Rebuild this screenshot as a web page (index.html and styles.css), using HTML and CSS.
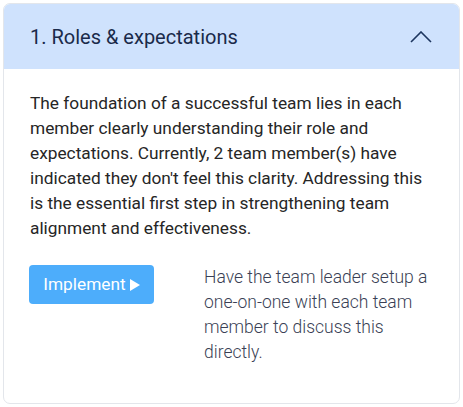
FILE: index.html
```html
<!DOCTYPE html>
<html>
<head>
<meta charset="utf-8">
<link rel="stylesheet" href="styles.css">
</head>
<body>
<div class="card">
  <div class="header">
    <h2 class="title">1. Roles &amp; expectations</h2>
    <svg class="chev" width="22" height="12" viewBox="0 0 22 12"><path d="M1 11 L11 1 L21 11" fill="none" stroke="#1d3660" stroke-width="1.6"/></svg>
  </div>
  <div class="body">
    <p class="desc">The foundation of a successful team lies in each member clearly understanding their role and expectations. Currently, 2 team member(s) have indicated they don't feel this clarity. Addressing this is the essential first step in strengthening team alignment and effectiveness.</p>
    <div class="action">
      <button class="btn">Implement <span class="tri"></span></button>
      <p class="hint">Have the team leader setup a one-on-one with each team member to discuss this directly.</p>
    </div>
  </div>
</div>
</body>
</html>
```
FILE: styles.css
```css
html, body { margin: 0; padding: 0; background: #fff; }
body { font-family: Roboto, "Noto Sans", sans-serif; }
.card {
  margin: 3px;
  width: 455px;
  height: 399px;
  border: 1px solid #e3e6eb;
  border-radius: 7px;
  overflow: hidden;
  box-sizing: content-box;
}
.header {
  background: #cfe2fd;
  height: 65px;
  display: flex;
  align-items: center;
  justify-content: space-between;
  padding: 0 27px 0 26px;
}
.title {
  margin: 0;
  font-size: 20px;
  font-weight: 400;
  color: #1a2a4a;
}
.body { padding: 22px 20px 0 26px; }
.desc {
  margin: 0;
  font-size: 17.3px;
  line-height: 25px;
  color: #262626;
  padding-right: 6px;
}
.action {
  display: flex;
  margin-top: 24px;
  align-items: flex-start;
}
.btn {
  flex: 0 0 125px;
  height: 39px;
  margin-left: -1px;
  background: #4dadfb;
  border: none;
  border-radius: 4px;
  color: #fff;
  font-family: Roboto, sans-serif;
  font-size: 17.3px;
  display: flex;
  align-items: center;
  justify-content: center;
  padding: 0 0 2px 0;
  gap: 4px;
}
.tri {
  width: 0; height: 0;
  border-left: 10px solid #fff;
  border-top: 6px solid transparent;
  border-bottom: 6px solid transparent;
  margin-top: 2px;
}
.hint {
  flex: 1;
  margin: 0 0 0 50px;
  font-size: 17.5px;
  line-height: 25px;
  font-weight: 300;
  color: #3a3f55;
}
```
